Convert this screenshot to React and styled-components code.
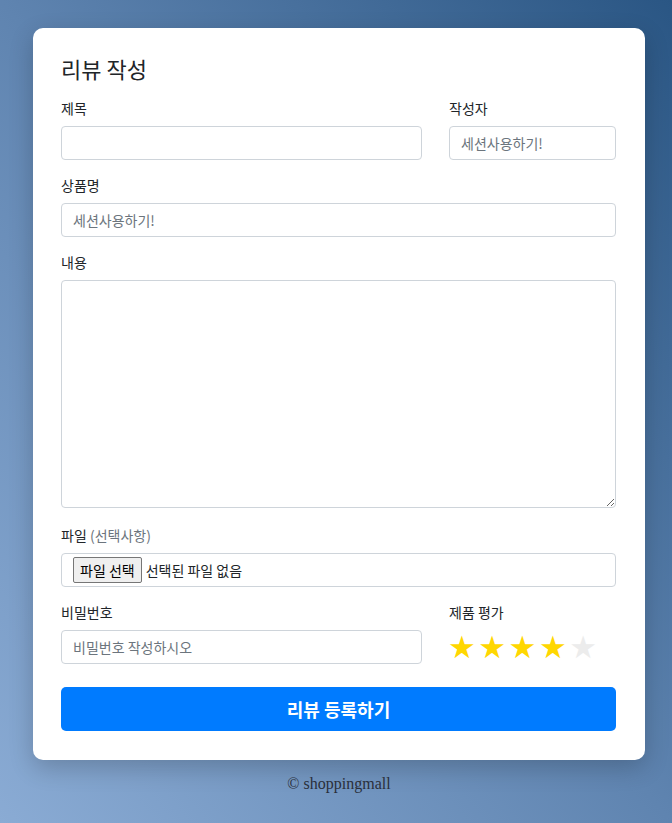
import React, { useState } from "react";
import styled, { createGlobalStyle } from "styled-components";

const GlobalStyle = createGlobalStyle`
  html, body {
    margin: 0;
    padding: 0;
  }
  body {
    min-height: 823px;
    background: linear-gradient(to top right, #8aabd4 0%, #5f84b0 50%, #2a5684 100%);
    font-family: "Noto Sans CJK KR", "Noto Sans", sans-serif;
    color: #212529;
  }
`;

const Page = styled.div`
  padding: 28px 27px 0 33px;
`;

const Card = styled.form`
  background: #fff;
  border-radius: 10px;
  box-shadow: 0 8px 24px rgba(0, 0, 0, 0.2);
  padding: 22px 29px 29px 28px;
`;

const Title = styled.h2`
  margin: 0 0 11px;
  font-size: 22px;
  font-weight: 400;
  line-height: 37px;
`;

const Row = styled.div`
  display: grid;
  grid-template-columns: 361px 1fr;
  column-gap: 27px;
  align-items: start;
`;

const Group = styled.div`
  margin-bottom: ${(p) => p.$mb ?? 15}px;
`;

const Label = styled.label`
  display: block;
  font-size: 14px;
  line-height: 21px;
  margin-bottom: 7px;
`;

const Muted = styled.span`
  color: #6c757d;
`;

const Input = styled.input`
  box-sizing: border-box;
  display: block;
  width: 100%;
  height: 34px;
  padding: 0 11px;
  border: 1px solid #ced4da;
  border-radius: 4px;
  font-family: inherit;
  font-size: 14px;
  color: #495057;
  outline: none;
  &::placeholder {
    color: #6c757d;
  }
`;

const TextArea = styled.textarea`
  box-sizing: border-box;
  display: block;
  width: 100%;
  height: 228px;
  padding: 8px 11px;
  border: 1px solid #ced4da;
  border-radius: 4px;
  font-family: inherit;
  font-size: 14px;
  outline: none;
`;

const FileBox = styled.div`
  box-sizing: border-box;
  display: flex;
  align-items: center;
  gap: 4px;
  height: 34px;
  padding: 0 11px;
  border: 1px solid #ced4da;
  border-radius: 4px;
  font-size: 14px;
  color: #212529;
`;

const FileButton = styled.span`
  display: inline-flex;
  align-items: center;
  height: 24px;
  padding: 0 6px;
  background: #efefef;
  border: 1px solid #767676;
  border-radius: 2px;
  font-size: 14px;
  color: #000;
`;

const Stars = styled.div`
  display: flex;
  height: 34px;
  align-items: center;
  gap: 2.5px;
  margin-left: -1px;
`;

const Star = styled.span`
  display: block;
  height: 34px;
  font-size: 31px;
  line-height: 34px;
  color: ${(p) => (p.$on ? "#ffd700" : "#ececec")};
  cursor: pointer;
  font-family: "DejaVu Sans", sans-serif;
`;

const Submit = styled.button`
  display: block;
  width: 100%;
  height: 44px;
  margin-top: 23px;
  border: none;
  border-radius: 5px;
  background: #007bff;
  color: #fff;
  font-family: inherit;
  font-size: 18px;
  font-weight: 700;
  cursor: pointer;
`;

const Footer = styled.footer`
  text-align: center;
  padding-top: 15px;
  font-family: "Liberation Serif", serif;
  font-size: 16px;
  color: #2a2f3a;
`;

export default function App() {
  const [rating, setRating] = useState(4);

  return (
    <>
      <GlobalStyle />
      <Page>
        <Card onSubmit={(e) => e.preventDefault()}>
          <Title>리뷰 작성</Title>
          <Row>
            <Group>
              <Label>제목</Label>
              <Input type="text" />
            </Group>
            <Group>
              <Label>작성자</Label>
              <Input type="text" placeholder="세션사용하기!" />
            </Group>
          </Row>
          <Group>
            <Label>상품명</Label>
            <Input type="text" placeholder="세션사용하기!" />
          </Group>
          <Group $mb={17}>
            <Label>내용</Label>
            <TextArea />
          </Group>
          <Group>
            <Label>
              파일 <Muted>(선택사항)</Muted>
            </Label>
            <FileBox>
              <FileButton>파일 선택</FileButton>
              <span>선택된 파일 없음</span>
            </FileBox>
          </Group>
          <Row>
            <Group $mb={0}>
              <Label>비밀번호</Label>
              <Input type="password" placeholder="비밀번호 작성하시오" />
            </Group>
            <Group $mb={0}>
              <Label>제품 평가</Label>
              <Stars>
                {[1, 2, 3, 4, 5].map((n) => (
                  <Star key={n} $on={n <= rating} onClick={() => setRating(n)}>
                    ★
                  </Star>
                ))}
              </Stars>
            </Group>
          </Row>
          <Submit type="submit">리뷰 등록하기</Submit>
        </Card>
        <Footer>© shoppingmall</Footer>
      </Page>
    </>
  );
}
